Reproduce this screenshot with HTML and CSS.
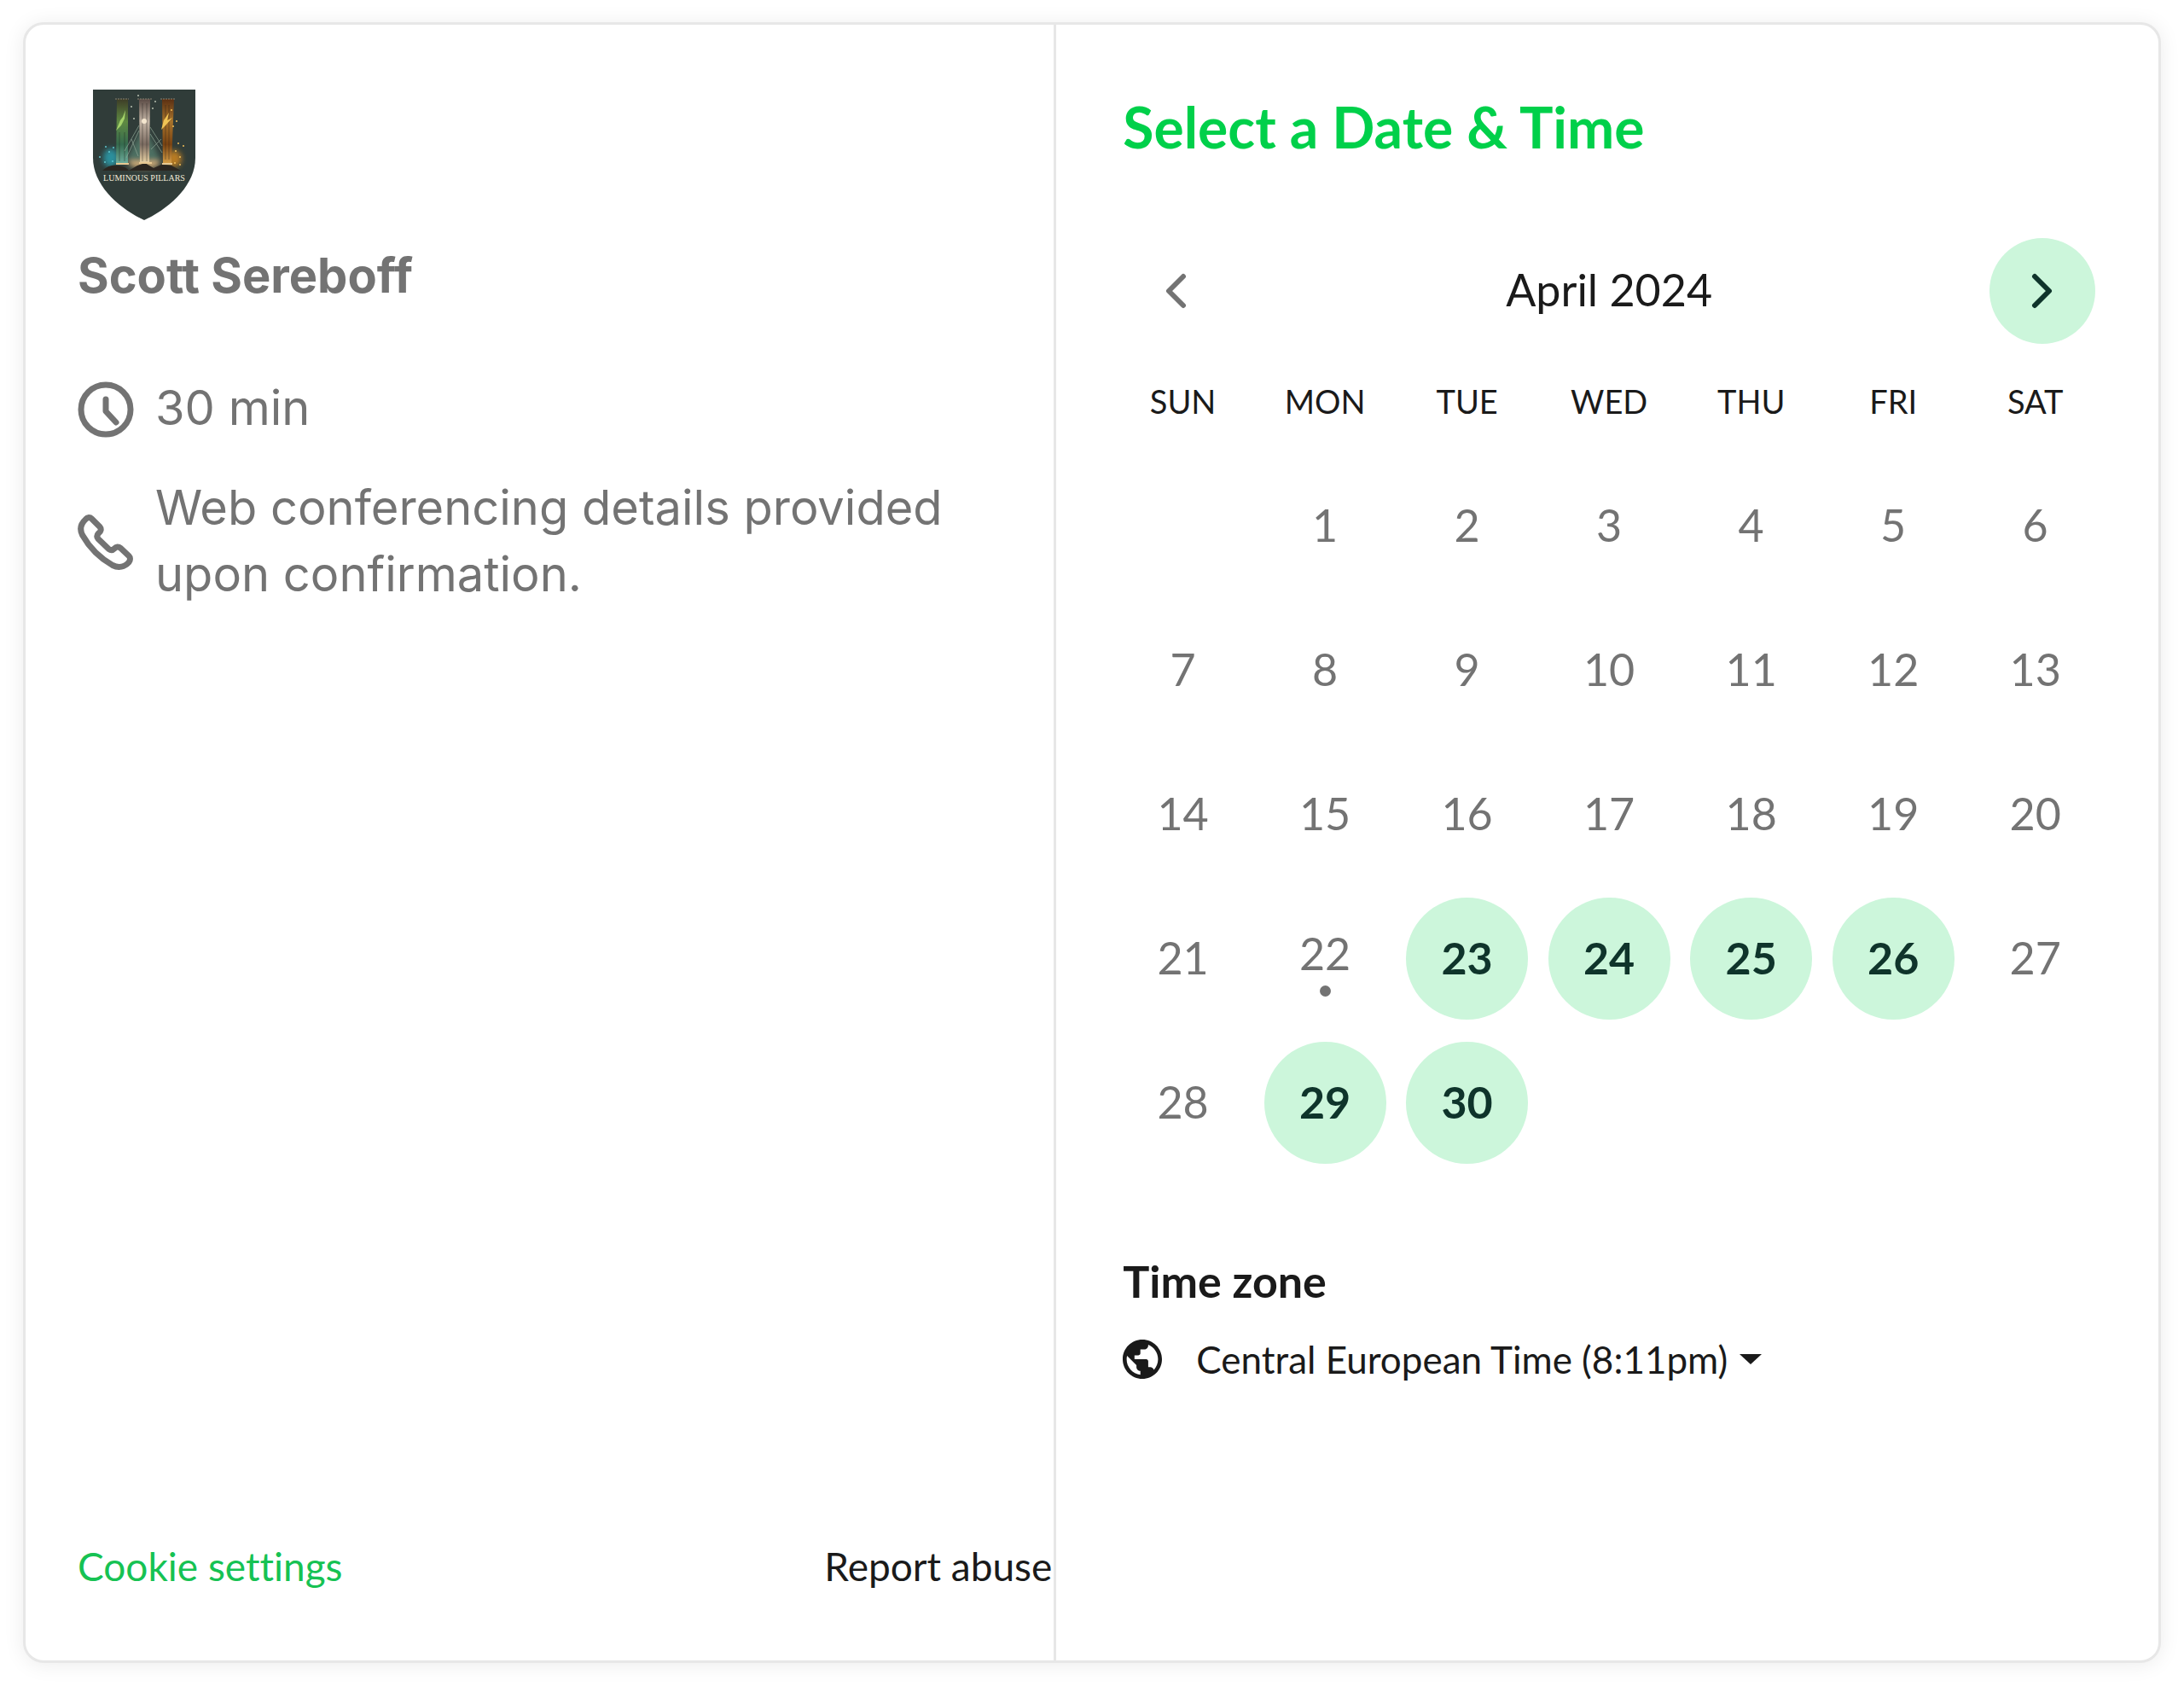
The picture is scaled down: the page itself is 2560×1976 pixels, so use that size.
FILE: index.html
```html
<!DOCTYPE html>
<html lang="en">

<head>
    <meta charset="UTF-8">
    <title>Select a Date &amp; Time</title>
    <link rel="stylesheet" href="styles.css">
</head>

<body>
    <div class="card">
        <div class="info">
            <svg class="logo" viewBox="0 0 120 154" role="img" aria-label="Luminous Pillars">
                <defs>
                    <linearGradient id="green" x1="0" y1="0" x2="0" y2="1">
                        <stop offset="0" stop-color="#3d3c26" />
                        <stop offset="0.35" stop-color="#5f8a42" />
                        <stop offset="0.7" stop-color="#356a4e" />
                        <stop offset="1" stop-color="#6fae9e" />
                    </linearGradient>
                    <linearGradient id="white" x1="0" y1="0" x2="0" y2="1">
                        <stop offset="0" stop-color="#5a4a44" />
                        <stop offset="0.35" stop-color="#c4b5a6" />
                        <stop offset="0.7" stop-color="#7c6c62" />
                        <stop offset="1" stop-color="#f0d8a8" />
                    </linearGradient>
                    <linearGradient id="gold" x1="0" y1="0" x2="0" y2="1">
                        <stop offset="0" stop-color="#5a2f12" />
                        <stop offset="0.35" stop-color="#a8742c" />
                        <stop offset="0.7" stop-color="#7a4312" />
                        <stop offset="1" stop-color="#d8a048" />
                    </linearGradient>
                    <filter id="glow" x="-50%" y="-50%" width="200%" height="200%">
                        <feGaussianBlur stdDeviation="3" />
                    </filter>
                </defs>
                <path d="M0 0H120V80C120 112 90 139 60 153C30 139 0 112 0 80Z" fill="#303c39" />
                <g filter="url(#glow)">
                    <ellipse cx="21" cy="80" rx="9" ry="11" fill="#2b8f9c" />
                    <ellipse cx="60" cy="86" rx="18" ry="6" fill="#d9b27a" />
                    <ellipse cx="95" cy="81" rx="9" ry="10" fill="#b87a24" />
                    <path d="M60 42L38 84H80Z" fill="#4e6f62" />
                </g>
                <path d="M28 11H41V87H27Z" fill="url(#green)" />
                <path d="M54 11H67L66 87H55Z" fill="url(#white)" />
                <path d="M81 11H95L92 87H82Z" fill="url(#gold)" />
                <path d="M26 11H42M52 11H69M79 11H96" stroke="#8a8273" stroke-dasharray="2 1" />
                <path d="M58 16V84M63 16V84M31 50V84M37 50V84M85 18V82M89 18V82" stroke="#20201c" stroke-opacity="0.4" />
                <path d="M54 42L37 72M54 48L39 80M67 44L81 66M67 52L81 74M45 58L53 78M68 70L80 58" fill="none" stroke="#8fa596" stroke-opacity="0.7" />
                <path d="M27 48L32 36L35 32L38 24L37 34L33 42Z" fill="#a5d26a" />
                <path d="M80 47L83 36L89 27L87 36L93 33L85 42Z" fill="#f0c455" />
                <circle cx="60" cy="37" r="3" fill="#f4e6cf" />
                <path d="M11 95Q20 87 30 89T42 95L52 89L61 86L71 92L80 88L92 89L103 95Z" fill="#2c2620" />
                <path d="M27 87H42M54 86H69M81 87H93" stroke="#e8c892" stroke-width="2" />
                <g fill="#5fc6cf">
                    <circle cx="8" cy="79" r="1" /><circle cx="15" cy="67" r="1" /><circle cx="19" cy="73" r="1" />
                    <circle cx="24" cy="68" r="1" /><circle cx="14" cy="85" r="1" /><circle cx="23" cy="84" r="1" />
                </g>
                <g fill="#f3bf58">
                    <circle cx="98" cy="37" r="1" /><circle cx="94" cy="43" r="1" /><circle cx="100" cy="63" r="1" />
                    <circle cx="97" cy="72" r="1" /><circle cx="106" cy="66" r="1" /><circle cx="102" cy="79" r="1" />
                    <circle cx="96" cy="86" r="1" /><circle cx="92" cy="24" r="1" /><circle cx="102" cy="88" r="1" />
                </g>
                <g fill="#b9c0b0">
                    <circle cx="53" cy="7" r="1" /><circle cx="70" cy="22" r="1" /><circle cx="45" cy="20" r="1" />
                    <circle cx="73" cy="14" r="1" /><circle cx="48" cy="34" r="1" />
                </g>
                <text class="logo-text" x="60" y="107" text-anchor="middle">LUMINOUS PILLARS</text>
            </svg>

            <h2 class="name">Scott Sereboff</h2>

            <ul class="details">
                <li>
                    <svg class="detail-icon" viewBox="0 0 66 66" aria-hidden="true">
                        <circle cx="33" cy="33" r="29" />
                        <path d="M33 21V35L45 48" />
                    </svg>
                    <span>30 min</span>
                </li>
                <li>
                    <svg class="detail-icon" viewBox="0 0 66 66" aria-hidden="true">
                        <path d="M9.5 5.5C11.5 3 14.5 3 16.5 5L26 14.5C28 17 27.5 20 24.5 22C22.5 24 22.5 26.5 24 28.5L36.5 40.5C38.5 42 41 42 43 40C45 37.5 48 37.5 50.5 39.5L60 48.5C62 50.5 62 53.5 60 56C55 61.5 48 63 41 59.5C26 51 14 39 5.5 24C2 17 3.5 11 9.5 5.5Z" />
                    </svg>
                    <span>Web conferencing details provided upon confirmation.</span>
                </li>
            </ul>

            <div class="links">
                <a class="cookie" href="#">Cookie settings</a>
                <a href="#">Report abuse</a>
            </div>
        </div>

        <div class="picker">
            <h1 class="title">Select a Date &amp; Time</h1>

            <div class="month">
                <button class="arrow" type="button" aria-label="Previous month" disabled>
                    <svg viewBox="0 0 26 42" aria-hidden="true"><path d="M22 4L5 21L22 38" /></svg>
                </button>
                <span class="month-name">April 2024</span>
                <button class="arrow next" type="button" aria-label="Next month">
                    <svg viewBox="0 0 26 42" aria-hidden="true"><path d="M4 4L21 21L4 38" /></svg>
                </button>
            </div>

            <table class="calendar">
                <thead>
                    <tr>
                        <th>SUN</th>
                        <th>MON</th>
                        <th>TUE</th>
                        <th>WED</th>
                        <th>THU</th>
                        <th>FRI</th>
                        <th>SAT</th>
                    </tr>
                </thead>
                <tbody>
                    <tr>
                        <td></td>
                        <td><button type="button" disabled>1</button></td>
                        <td><button type="button" disabled>2</button></td>
                        <td><button type="button" disabled>3</button></td>
                        <td><button type="button" disabled>4</button></td>
                        <td><button type="button" disabled>5</button></td>
                        <td><button type="button" disabled>6</button></td>
                    </tr>
                    <tr>
                        <td><button type="button" disabled>7</button></td>
                        <td><button type="button" disabled>8</button></td>
                        <td><button type="button" disabled>9</button></td>
                        <td><button type="button" disabled>10</button></td>
                        <td><button type="button" disabled>11</button></td>
                        <td><button type="button" disabled>12</button></td>
                        <td><button type="button" disabled>13</button></td>
                    </tr>
                    <tr>
                        <td><button type="button" disabled>14</button></td>
                        <td><button type="button" disabled>15</button></td>
                        <td><button type="button" disabled>16</button></td>
                        <td><button type="button" disabled>17</button></td>
                        <td><button type="button" disabled>18</button></td>
                        <td><button type="button" disabled>19</button></td>
                        <td><button type="button" disabled>20</button></td>
                    </tr>
                    <tr>
                        <td><button type="button" disabled>21</button></td>
                        <td><button class="today" type="button" disabled>22</button></td>
                        <td><button class="open" type="button">23</button></td>
                        <td><button class="open" type="button">24</button></td>
                        <td><button class="open" type="button">25</button></td>
                        <td><button class="open" type="button">26</button></td>
                        <td><button type="button" disabled>27</button></td>
                    </tr>
                    <tr>
                        <td><button type="button" disabled>28</button></td>
                        <td><button class="open" type="button">29</button></td>
                        <td><button class="open" type="button">30</button></td>
                        <td></td>
                        <td></td>
                        <td></td>
                        <td></td>
                    </tr>
                </tbody>
            </table>

            <div class="timezone">
                <label for="timezone">Time zone</label>
                <div class="timezone-row">
                    <svg class="globe" viewBox="2 2 20 20" aria-hidden="true">
                        <path d="M12 2C6.48 2 2 6.48 2 12s4.48 10 10 10 10-4.48 10-10S17.52 2 12 2zm-1 17.93c-3.95-.49-7-3.85-7-7.93 0-.62.08-1.21.21-1.79L9 15v1c0 1.1.9 2 2 2v1.93zm6.9-2.54c-.26-.81-1-1.39-1.9-1.39h-1v-3c0-.55-.45-1-1-1H8v-2h2c.55 0 1-.45 1-1V7h2c1.1 0 2-.9 2-2v-.41c2.93 1.19 5 4.06 5 7.41 0 2.08-.8 3.97-2.1 5.39z" />
                    </svg>
                    <select id="timezone">
                        <option>Central European Time (8:11pm)</option>
                    </select>
                    <svg class="caret" viewBox="0 0 26 12" aria-hidden="true"><path d="M0 0H26L13 12Z" /></svg>
                </div>
            </div>
        </div>
    </div>
</body>

</html>
```
FILE: styles.css
```css
* {
    box-sizing: border-box;
}

body {
    display: flex;
    min-height: 100vh;
    margin: 0;
    padding: 26px 27px 27px;
    font-family: Lato, sans-serif;
    font-variant-ligatures: no-common-ligatures;
    color: #1a1a1a;
    background: #fff;
}

button,
select {
    padding: 0;
    border: 0;
    font: inherit;
    color: inherit;
    background: none;
    appearance: none;
}

.card {
    display: grid;
    flex: 1;
    grid-template-columns: 29fr 31fr;
    border: 3px solid #e7e7e7;
    border-radius: 24px;
    background: #fff;
    box-shadow: 0 2px 24px rgba(0, 0, 0, 0.08);
}

.info {
    display: flex;
    flex-direction: column;
    padding: 76px 0 78px 61px;
    border-right: 3px solid #e7e7e7;
}

.logo {
    width: 120px;
    height: 154px;
    margin-left: 18px;
}

.logo-text {
    font-family: "Liberation Serif", serif;
    font-size: 10px;
    fill: #f1ead8;
}

.name {
    margin: 32px 0 0;
    font-family: Inter, sans-serif;
    font-size: 56px;
    line-height: 64px;
    color: #737373;
}

.details {
    display: grid;
    gap: 39px;
    margin: 84px 0 0;
    padding: 0;
    list-style: none;
    font-family: Inter, sans-serif;
    font-size: 56px;
    line-height: 78px;
    color: #737373;
}

.details li {
    display: flex;
    align-items: center;
    gap: 25px;
    padding-right: 80px;
}

.detail-icon {
    flex: none;
    width: 66px;
    height: 66px;
    margin-top: 4px;
    fill: none;
    stroke: #737373;
    stroke-width: 7;
    stroke-linecap: round;
    stroke-linejoin: round;
}

.links {
    display: flex;
    justify-content: space-between;
    margin-top: auto;
    padding-right: 2px;
    font-size: 46px;
    line-height: 64px;
}

.links a {
    color: #1a1a1a;
    text-decoration: none;
}

.links .cookie {
    color: #16c253;
}

.picker {
    padding: 80px 61px 0 65px;
}

.title {
    margin: 0 13px;
    font-size: 66px;
    line-height: 80px;
    color: #00d04a;
}

.month {
    display: flex;
    align-items: center;
    justify-content: space-between;
    margin: 90px 13px 0;
}

.arrow {
    display: flex;
    align-items: center;
    justify-content: center;
    width: 124px;
    height: 124px;
    border-radius: 50%;
}

.arrow svg {
    width: 26px;
    height: 42px;
    fill: none;
    stroke: #737373;
    stroke-width: 6;
    stroke-linecap: round;
    stroke-linejoin: round;
}

.arrow.next {
    background: #ccf6db;
}

.arrow.next svg {
    stroke: #0f342b;
}

.month-name {
    padding-bottom: 4px;
    font-size: 52px;
}

.calendar {
    width: 100%;
    margin-top: 35px;
    border-collapse: collapse;
    table-layout: fixed;
}

.calendar th {
    height: 64px;
    padding: 0;
    font-size: 38px;
    font-weight: 400;
}

.calendar td {
    height: 169px;
    padding: 0;
    text-align: center;
    vertical-align: middle;
}

.calendar tbody::before {
    display: block;
    height: 30px;
    content: "";
}

.calendar button {
    display: inline-flex;
    flex-direction: column;
    align-items: center;
    justify-content: center;
    width: 143px;
    height: 143px;
    padding-bottom: 4px;
    border-radius: 50%;
    font-size: 52px;
    line-height: 60px;
    color: #737373;
    vertical-align: middle;
}

.calendar button.open {
    font-weight: 700;
    color: #0f342b;
    background: #ccf6db;
}

.calendar .today {
    padding: 8px 0 0;
}

.calendar .today::after {
    width: 13px;
    height: 13px;
    margin-top: 8px;
    border-radius: 50%;
    background: #737373;
    content: "";
}

.timezone {
    margin: 92px 13px 0;
}

.timezone label {
    font-size: 52px;
    font-weight: 700;
    line-height: 64px;
}

.timezone-row {
    display: flex;
    align-items: center;
    margin-top: 28px;
}

.globe {
    width: 46px;
    height: 46px;
    margin-right: 40px;
    fill: #1a1a1a;
}

.timezone select {
    font-size: 44px;
    line-height: 64px;
}

.caret {
    width: 26px;
    height: 12px;
    margin-left: 12px;
    fill: #1a1a1a;
    pointer-events: none;
}
```
